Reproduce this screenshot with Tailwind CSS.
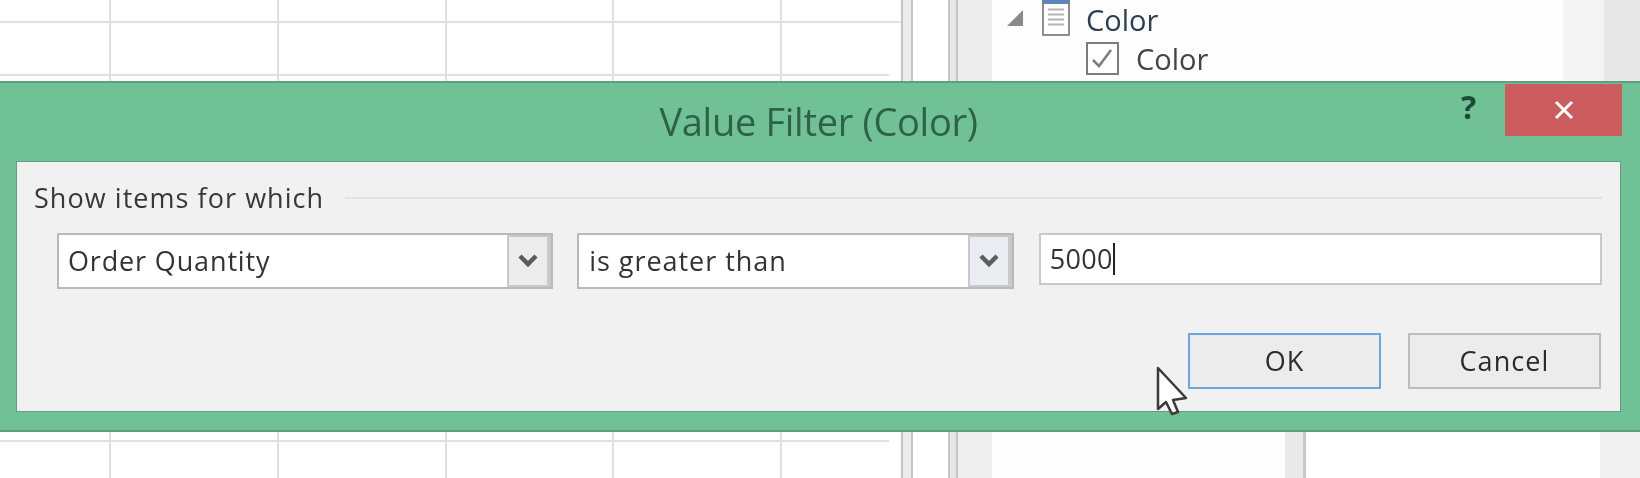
<!doctype html>
<html>
<head>
<meta charset="utf-8">
<script src="https://cdn.jsdelivr.net/npm/@tailwindcss/browser@4"></script>
</head>
<body class="m-0 bg-white">
<div class="relative flex w-[1640px] h-[478px] overflow-hidden bg-white font-['Open_Sans',sans-serif] text-[#333] blur-[0.6px]">
  <!-- worksheet -->
  <div class="grid w-[901px] shrink-0 grid-cols-[111px_168px_168px_167px_168px_119px] grid-rows-[23px_53px_366px_36px]">
    <div class="border-r-2 border-b-2 border-[#e0e0e0]"></div><div class="border-r-2 border-b-2 border-[#e0e0e0]"></div><div class="border-r-2 border-b-2 border-[#e0e0e0]"></div><div class="border-r-2 border-b-2 border-[#e0e0e0]"></div><div class="border-r-2 border-b-2 border-[#e0e0e0]"></div><div class="border-b-2 border-[#e0e0e0]"></div>
    <div class="border-r-2 border-b-2 border-[#e0e0e0]"></div><div class="border-r-2 border-b-2 border-[#e0e0e0]"></div><div class="border-r-2 border-b-2 border-[#e0e0e0]"></div><div class="border-r-2 border-b-2 border-[#e0e0e0]"></div><div class="border-r-2 border-b-2 border-[#e0e0e0]"></div><div class="mr-3 border-b-2 border-[#e0e0e0]"></div>
    <div class="border-r-2 border-b-2 border-[#e0e0e0]"></div><div class="border-r-2 border-b-2 border-[#e0e0e0]"></div><div class="border-r-2 border-b-2 border-[#e0e0e0]"></div><div class="border-r-2 border-b-2 border-[#e0e0e0]"></div><div class="border-r-2 border-b-2 border-[#e0e0e0]"></div><div class="mr-3 border-b-2 border-[#e0e0e0]"></div>
    <div class="border-r-2 border-[#e0e0e0]"></div><div class="border-r-2 border-[#e0e0e0]"></div><div class="border-r-2 border-[#e0e0e0]"></div><div class="border-r-2 border-[#e0e0e0]"></div><div class="border-r-2 border-[#e0e0e0]"></div><div></div>
  </div>
  <!-- split lines -->
  <div class="flex w-[57px] shrink-0">
    <div class="w-[2px] bg-[#c4c4c4]"></div>
    <div class="w-[8px] bg-[#ececec]"></div>
    <div class="w-[2px] bg-[#c4c4c4]"></div>
    <div class="w-[35px] bg-white"></div>
    <div class="w-[2px] bg-[#c4c4c4]"></div>
    <div class="w-[6px] bg-[#e6e6e6]"></div>
    <div class="w-[2px] bg-[#c4c4c4]"></div>
  </div>
  <!-- field list pane -->
  <div class="flex flex-1 flex-col">
    <div class="flex h-[81px]">
      <div class="w-[34px] bg-[#ededed]"></div>
      <div class="w-[571px] bg-[#fdfdfd] pl-[15px]">
        <div class="flex h-[40px] items-start">
          <svg class="mt-[10px]" width="16" height="16" viewBox="0 0 16 16"><path d="M16 0V16H0Z" fill="#8a8a8a"/></svg>
          <svg class="ml-[19px]" width="28" height="36" viewBox="0 0 28 36"><rect x="1" y="-1" width="26" height="36" fill="#fff" stroke="#8d8d8d" stroke-width="2"/><rect x="0" y="0" width="28" height="4" fill="#5f84b8"/><path d="M6 9.500H22M6 14.500H22M6 19.500H22M6 24.500H22" stroke="#b4b4b4" stroke-width="2"/></svg>
          <span class="ml-[16px] mt-[2px] text-[29px] leading-[36px] font-medium tracking-[0px] text-[#2c3f58]">Color</span>
        </div>
        <div class="mt-[2px] flex h-[33px] items-start pl-[79px]">
          <svg width="33" height="33" viewBox="0 0 33 33"><rect x="1" y="1" width="31" height="31" fill="#fff" stroke="#7c7c7c" stroke-width="2"/><path d="M7 18L13 24L25 8" fill="none" stroke="#7d7d7d" stroke-width="2.500"/></svg>
          <span class="ml-[17px] text-[29px] leading-[34px] font-medium tracking-[0px] text-[#444]">Color</span>
        </div>
      </div>
      <div class="w-[41px] bg-[#f4f4f4]"></div>
      <div class="flex-1 bg-[#e7e7e7]"></div>
    </div>
    <div class="flex flex-1 pt-[351px]">
      <div class="w-[34px] bg-[#eeeeee]"></div>
      <div class="w-[293px] bg-[#fdfdfd]"></div>
      <div class="w-[18px] bg-[#e9e9e9]"></div>
      <div class="w-[3px] bg-[#c8c8c8]"></div>
      <div class="w-[294px] bg-white"></div>
      <div class="flex-1 bg-[#f1f1f1]"></div>
    </div>
  </div>

  <!-- dialog -->
  <div class="absolute left-0 top-[81px] flex h-[351px] w-[1640px] flex-col border-y-2 border-[#5f9f7f] bg-[#70c196] pb-[18px] pl-[16px] pr-[19px]">
    <div class="relative flex h-[78px] shrink-0 items-start justify-center">
      <span class="mt-[15px] text-[38px] leading-[46px] tracking-[-0.3px] text-[#2d6248]">Value Filter (Color)</span>
      <span class="absolute left-[1445px] top-[4px] text-[32px] leading-[40px] font-bold text-[#1c4a34]">?</span>
      <div class="absolute left-[1489px] top-[1px] flex h-[52px] w-[117px] items-center justify-center bg-[#cd5c5f]">
        <svg width="20" height="20" viewBox="0 0 20 20"><path d="M2 2L18 18M18 2L2 18" stroke="#fff" stroke-width="3"/></svg>
      </div>
    </div>
    <div class="flex flex-1 flex-col border border-[#5f9f7f] bg-[#f1f1f1] pl-[17px] pr-[18px]">
      <div class="flex h-[71px] items-center">
        <span class="text-[27px] leading-[34px] tracking-[1.05px] text-[#383838]">Show items for which</span>
        <div class="ml-[21px] h-[2px] flex-1 bg-[#e2e2e2]"></div>
      </div>
      <div class="flex items-start pl-[23px]">
        <div class="flex h-[56px] w-[497px] border-2 border-[#b9b9b9] bg-white">
          <div class="flex-1 pl-[9px] text-[27px] leading-[52px] tracking-[0.85px] text-[#333]">Order Quantity</div>
          <div class="flex w-[44px] items-center justify-center border-y-2 border-r-4 border-l-2 border-[#c9c9c9] bg-[#ececec]">
            <svg width="20" height="16" viewBox="0 0 20 16"><path d="M2 3L10 11L18 3" fill="none" stroke="#5c5c5c" stroke-width="4.500"/></svg>
          </div>
        </div>
        <div class="ml-[24px] flex h-[56px] w-[437px] border-2 border-[#b9b9b9] bg-white">
          <div class="flex-1 pl-[10px] text-[27px] leading-[52px] tracking-[0.95px] text-[#333]">is greater than</div>
          <div class="flex w-[44px] items-center justify-center border-y-2 border-r-4 border-l-2 border-[#c9c9c9] bg-[#e9edf1]">
            <svg width="20" height="16" viewBox="0 0 20 16"><path d="M2 3L10 11L18 3" fill="none" stroke="#5c5c5c" stroke-width="4.500"/></svg>
          </div>
        </div>
        <div class="ml-[25px] flex h-[52px] w-[564px] items-center border-2 border-[#c8c8c8] bg-white pl-[9px]">
          <span class="text-[27px] leading-[34px] tracking-[0.3px] text-[#333]">5000</span>
          <span class="h-[32px] w-[2px] bg-[#222]"></span>
        </div>
      </div>
      <div class="flex justify-end gap-[27px] pt-[44px] pr-[1px]">
        <div class="flex h-[56px] w-[193px] items-center justify-center border-2 border-[#6ba6e0] bg-[#ececec] text-[27px] tracking-[1px] text-[#2b2b2b]">OK</div>
        <div class="flex h-[56px] w-[193px] items-center justify-center border-2 border-[#bdbdbd] bg-[#ececec] text-[27px] tracking-[1.1px] text-[#2b2b2b]">Cancel</div>
      </div>
    </div>
  </div>

  <!-- pointer -->
  <svg class="absolute left-[1155px] top-[365px]" width="36" height="52" viewBox="0 0 36 52"><path d="M3 3V44L11 37L17 49L23 47L18 35L31 33Z" fill="#fff" stroke="#3a3a3a" stroke-width="2.500" stroke-linejoin="round"/></svg>
</div>
</body>
</html>
